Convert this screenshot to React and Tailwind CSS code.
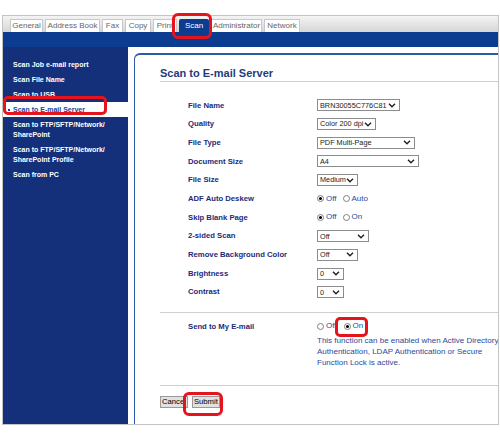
import React from 'react';

const Chevron = () => (
  <svg width="8" height="5" viewBox="0 0 8 5" className="shrink-0">
    <polyline points="1,0.8 4,3.8 7,0.8" fill="none" stroke="#222" strokeWidth="1.4" />
  </svg>
);

const Select = ({ className, text }) => (
  <div className={'h-[12px] border border-[#8c8c8c] bg-white flex items-center justify-between pl-[2px] pr-[3px] text-[7.3px] leading-none text-[#222] whitespace-nowrap ' + className}>
    <span>{text}</span>
    <Chevron />
  </div>
);

const Radio = ({ checked }) => (
  <span className="w-[7px] h-[7px] rounded-full border border-[#808080] bg-white flex items-center justify-center shrink-0">
    {checked && <span className="w-[3px] h-[3px] rounded-full bg-black" />}
  </span>
);

const RadioPair = ({ a, b, first }) => (
  <div className="flex items-center text-[8px] leading-none text-[#2b4a9a]">
    <Radio checked={first} />
    <span className="ml-[2px] mr-[6px]">{a}</span>
    <Radio checked={!first} />
    <span className="ml-[2px]">{b}</span>
  </div>
);

const tabs = [
  { name: 'General', w: 'w-[33px]' },
  { name: 'Address Book', w: 'w-[55px]' },
  { name: 'Fax', w: 'w-[21px]' },
  { name: 'Copy', w: 'w-[26px]' },
  { name: 'Print', w: 'w-[24px]' },
  { name: 'Scan', w: 'w-[30px]', active: true },
  { name: 'Administrator', w: 'w-[51px]' },
  { name: 'Network', w: 'w-[36px]' },
];

const menu = [
  ['Scan Job e-mail report'],
  ['Scan File Name'],
  ['Scan to USB'],
  ['Scan to E-mail Server'],
  ['Scan to FTP/SFTP/Network/', 'SharePoint'],
  ['Scan to FTP/SFTP/Network/', 'SharePoint Profile'],
  ['Scan from PC'],
];

const rows = [
  { label: 'File Name', ctl: <Select className="w-[83px]" text="BRN30055C776C81" /> },
  { label: 'Quality', ctl: <Select className="w-[59px]" text="Color 200 dpi" /> },
  { label: 'File Type', ctl: <Select className="w-[98px]" text="PDF Multi-Page" /> },
  { label: 'Document Size', ctl: <Select className="w-[102px]" text="A4" /> },
  { label: 'File Size', ctl: <Select className="w-[41px]" text="Medium" /> },
  { label: 'ADF Auto Deskew', ctl: <RadioPair a="Off" b="Auto" first /> },
  { label: 'Skip Blank Page', ctl: <RadioPair a="Off" b="On" first /> },
  { label: '2-sided Scan', ctl: <Select className="w-[52px]" text="Off" /> },
  { label: 'Remove Background Color', ctl: <Select className="w-[41px]" text="Off" /> },
  { label: 'Brightness', ctl: <Select className="w-[27px]" text="0" /> },
  { label: 'Contrast', ctl: <Select className="w-[27px]" text="0" /> },
];

export default function App() {
  return (
    <div className="relative w-[500px] h-[441px] bg-white overflow-hidden font-['Liberation_Sans',Arial,sans-serif]">
      <div className="mt-[15px] ml-[2px] w-[497px] h-[410px] border border-[#c4c4c4] flex flex-col overflow-hidden">
        {/* tab bar */}
        <div className="h-[16px] shrink-0 bg-gradient-to-b from-[#f4f4f4] to-[#d6d6d6] flex items-end pl-[7px] gap-[2px]">
          {tabs.map((t) => (
            <div
              key={t.name}
              className={
                t.active
                  ? 'h-[13px] bg-[#0c3c90] text-white text-[8px] flex items-center justify-center rounded-t-[2px] ' + t.w
                  : 'h-[13px] bg-white border border-b-0 border-[#c8c8c8] text-[#666] text-[8px] flex items-center justify-center overflow-hidden whitespace-nowrap ' + t.w
              }
            >
              {t.name}
            </div>
          ))}
        </div>
        <div className="h-[15px] shrink-0 bg-[#0c3c90]" />

        <div className="flex flex-1 min-h-0">
          {/* sidebar */}
          <div className="w-[125px] shrink-0 bg-[#15307a] pt-[10px] flex flex-col">
            {menu.map((m, i) =>
              i === 3 ? (
                <div key={i} className="w-[131px] bg-white py-[2.5px] pl-[5px] flex items-center text-[7px] leading-[10px] font-bold text-[#1f3f9a]">
                  <span className="w-[2px] h-[2px] bg-[#1f3f9a] mr-[3px]" />
                  {m[0]}
                </div>
              ) : (
                <div key={i} className="py-[2.5px] pl-[10px] text-[7px] leading-[10px] font-bold text-white">
                  {m.map((l) => (
                    <div key={l}>{l}</div>
                  ))}
                </div>
              )
            )}
          </div>

          {/* content panel */}
          <div className="flex-1 min-w-0 ml-[6px] mt-[6px] border-t-2 border-l border-[#2a5aa8] rounded-tl-[6px] bg-white overflow-hidden">
            <div className="ml-[25px] mt-[11px] pb-[1px] border-b border-[#cfcfcf] text-[11px] leading-[14px] font-bold text-[#1f3c7a]">
              Scan to E-mail Server
            </div>

            <div className="mt-[14px] flex flex-col">
              {rows.map((r) => (
                <div key={r.label} className="h-[18.7px] flex items-center">
                  <div className="w-[182px] shrink-0 pl-[53px] text-[7.7px] font-bold text-[#1e2a78] whitespace-nowrap">{r.label}</div>
                  {r.ctl}
                </div>
              ))}
            </div>

            <div className="ml-[25px] mt-[10px] border-t border-[#cfcfcf] pt-[8px] pb-[17px] flex">
              <div className="w-[157px] shrink-0 pl-[28px] pt-[1px] text-[7.7px] leading-[10px] font-bold text-[#1e2a78] whitespace-nowrap">
                Send to My E-mail
              </div>
              <div className="flex flex-col">
                <div className="h-[11px] flex items-center text-[8px] leading-none text-[#2b4a9a]">
                  <Radio />
                  <span className="ml-[2px] mr-[7px]">Off</span>
                  <Radio checked />
                  <span className="ml-[2px]">On</span>
                </div>
                <div className="mt-[3px] text-[8px] leading-[11px] text-[#2b4a9a] whitespace-nowrap">
                  <div>This function can be enabled when Active Directory</div>
                  <div>Authentication, LDAP Authentication or Secure</div>
                  <div>Function Lock is active.</div>
                </div>
              </div>
            </div>

            <div className="ml-[25px] border-t border-[#cfcfcf] pt-[10px] flex gap-[4px]">
              <button className="h-[12px] px-[1px] bg-[#e1e1e1] border border-[#9a9a9a] text-[7.7px] leading-none text-black">Cancel</button>
              <button className="h-[12px] px-[1px] bg-[#e1e1e1] border border-[#9a9a9a] text-[7.7px] leading-none text-black">Submit</button>
            </div>
          </div>
        </div>
      </div>

      {/* red callouts */}
      <div className="absolute left-[172px] top-[13px] w-[40px] h-[26px] border-[3px] border-[#e5141c] rounded-[6px]" />
      <div className="absolute left-[3px] top-[96px] w-[104px] h-[19px] border-[3px] border-[#e5141c] rounded-[5px]" />
      <div className="absolute left-[335px] top-[317px] w-[33px] h-[20px] border-[3px] border-[#e5141c] rounded-[5px]" />
      <div className="absolute left-[183px] top-[392px] w-[40px] h-[24px] border-[3px] border-[#e5141c] rounded-[6px]" />
    </div>
  );
}
